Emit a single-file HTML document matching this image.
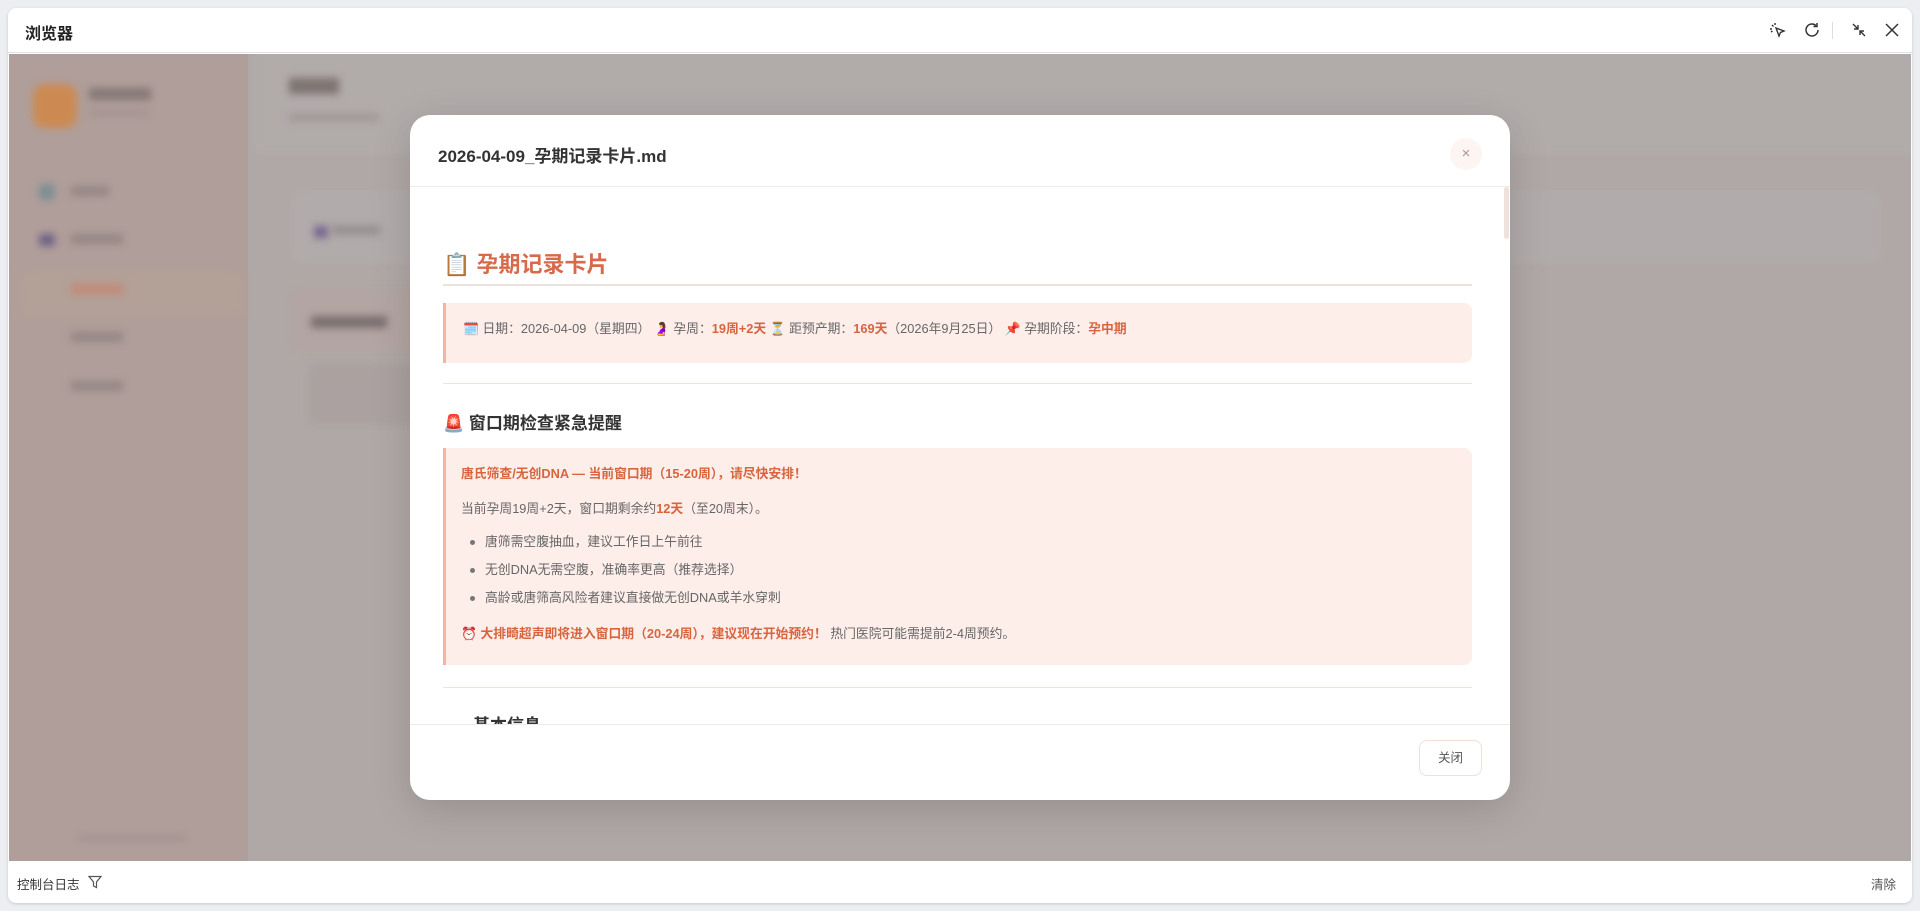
<!DOCTYPE html>
<html><head><meta charset="utf-8"><style>
*{box-sizing:border-box;margin:0;padding:0}
body{width:1920px;height:911px;background:#eceef2;font-family:"Liberation Sans","Noto Sans CJK SC",sans-serif;position:relative;overflow:hidden}
.win{position:absolute;left:8px;top:8px;width:1904px;height:895px;background:#fff;border-radius:8px;box-shadow:0 1px 3px rgba(0,0,0,.15);overflow:hidden}
.tb{position:absolute;left:0;top:0;width:100%;height:45px;border-bottom:1px solid #e2e2e6}
.tb .t{position:absolute;left:17px;top:12px;font-size:16px;font-weight:bold;color:#222}
.stage{position:absolute;left:1px;top:46px;width:1902px;height:807px;background:#b0a8a6;overflow:hidden}
.side{position:absolute;left:0;top:0;width:239px;height:100%;background:#b09e9a}
.blur{filter:blur(4px)}
.bot{position:absolute;left:0;top:853px;width:100%;height:42px}
.modal{position:absolute;left:410px;top:115px;width:1100px;height:685px;background:#fff;border-radius:20px;overflow:hidden;box-shadow:0 10px 40px rgba(0,0,0,.15)}
.mh{height:72px;border-bottom:1px solid #f0ebe9;position:relative}
.mh .t{position:absolute;left:28px;top:27px;font-size:17px;font-weight:bold;color:#333}
.xc{position:absolute;left:1040px;top:23px;width:32px;height:32px;border-radius:50%;background:#fdf5f1;color:#b09591;text-align:center;line-height:31px;font-size:15px}
.body{position:absolute;left:0;top:72px;width:1100px;height:537px;overflow:hidden}
.sb{position:absolute;left:1094px;top:0;width:5px;height:52px;background:#efe2dd;border-radius:3px}
.c{position:absolute;left:33px;width:1029px}
.h1{font-size:22px;font-weight:bold;color:#d86a4c}
.hr{height:1px;background:#f0e3dc}
.box{background:#fdeeea;border-left:3px solid #f4b3a3;border-radius:0 8px 8px 0}
.tx{font-size:12.8px;color:#666;white-space:nowrap}
.r{color:#d8643f;font-weight:bold}
.h2{font-size:17px;font-weight:bold;color:#333}
.ft{position:absolute;left:0;top:609px;width:1100px;height:76px;border-top:1px solid #f0ebe9}
.btn{position:absolute;left:1009px;top:15px;width:63px;height:36px;border:1px solid #f0e0d8;border-radius:8px;font-size:12.5px;color:#555;text-align:center;line-height:34px}
li{list-style:none;position:relative;padding-left:24px}
li:before{content:"";position:absolute;left:9px;top:12px;width:5px;height:5px;border-radius:50%;background:#777}
</style></head><body>
<div class="win">
<div class="tb"><div class="t">浏览器</div>
<svg style="position:absolute;left:1760px;top:13px" width="20" height="20" viewBox="0 0 20 20" fill="none" stroke="#333" stroke-width="1.4"><path d="M8 7l8 3-3.5 1.5L11 15z"/><path d="M4 4l1.5 1.5M2 8h2M7 2v2M3 11l1.5-1"/></svg>
<svg style="position:absolute;left:1795px;top:13px" width="18" height="18" viewBox="0 0 18 18" fill="none" stroke="#333" stroke-width="1.5"><path d="M15 9a6 6 0 1 1-2-4.5"/><path d="M14 2v3.5h-3.5"/></svg>
<div style="position:absolute;left:1824px;top:14px;width:1px;height:17px;background:#ddd"></div>
<svg style="position:absolute;left:1843px;top:14px" width="16" height="16" viewBox="0 0 16 16" fill="none" stroke="#333" stroke-width="1.4"><path d="M2 2l5 5M7 3v4H3M14 14l-5-5M9 13V9h4"/></svg>
<svg style="position:absolute;left:1876px;top:14px" width="16" height="16" viewBox="0 0 16 16" fill="none" stroke="#333" stroke-width="1.5"><path d="M2 2l12 12M14 2L2 14"/></svg>
</div>
<div class="stage">
<div class="side">
<div class="blur" style="position:absolute;left:24px;top:30px;width:44px;height:44px;border-radius:12px;background:#cc8a52"></div>
<div class="blur" style="position:absolute;left:80px;top:34px;width:62px;height:12px;background:#857876"></div>
<div class="blur" style="position:absolute;left:80px;top:56px;width:60px;height:6px;background:#a29491"></div>
<div class="blur" style="position:absolute;left:30px;top:130px;width:16px;height:16px;background:#7d8e96;border-radius:4px"></div>
<div class="blur" style="position:absolute;left:62px;top:132px;width:38px;height:10px;background:#958785"></div>
<div class="blur" style="position:absolute;left:30px;top:180px;width:16px;height:12px;background:#6e5f86;border-radius:3px"></div>
<div class="blur" style="position:absolute;left:62px;top:180px;width:52px;height:10px;background:#958785"></div>
<div class="blur" style="position:absolute;left:10px;top:218px;width:226px;height:44px;background:#b3a097;border-radius:8px"></div>
<div class="blur" style="position:absolute;left:62px;top:230px;width:52px;height:10px;background:#c28a78"></div>
<div class="blur" style="position:absolute;left:62px;top:278px;width:52px;height:10px;background:#958785"></div>
<div class="blur" style="position:absolute;left:62px;top:327px;width:52px;height:10px;background:#958785"></div>
<div class="blur" style="position:absolute;left:68px;top:781px;width:110px;height:6px;background:#a29491"></div>
</div>
<div class="blur" style="position:absolute;left:244px;top:-10px;width:1663px;height:110px;background:#b1abaa"></div>
<div class="blur" style="position:absolute;left:280px;top:24px;width:50px;height:16px;background:#7e7371"></div>
<div class="blur" style="position:absolute;left:280px;top:60px;width:90px;height:7px;background:#a09694"></div>
<div class="blur" style="position:absolute;left:282px;top:137px;width:1590px;height:72px;background:#b1abab;border-radius:10px"></div>
<div class="blur" style="position:absolute;left:305px;top:172px;width:14px;height:12px;background:#75668e"></div>
<div class="blur" style="position:absolute;left:323px;top:172px;width:48px;height:8px;background:#938b8b"></div>
<div class="blur" style="position:absolute;left:282px;top:236px;width:200px;height:60px;background:#b3a5a2;border-radius:10px"></div>
<div class="blur" style="position:absolute;left:302px;top:262px;width:76px;height:12px;background:#7a6e6e"></div>
<div class="blur" style="position:absolute;left:300px;top:310px;width:110px;height:60px;background:#aaa1a0"></div>
</div>
<div class="bot">
<div style="position:absolute;left:9px;top:13px;font-size:12.5px;color:#333">控制台日志</div>
<svg style="position:absolute;left:80px;top:14px" width="14" height="14" viewBox="0 0 14 14" fill="none" stroke="#555" stroke-width="1.2"><path d="M1 1.5h12L8.5 7v5.5l-3-1.5V7z"/></svg>
<div style="position:absolute;right:16px;top:13px;font-size:12.5px;color:#555">清除</div>
</div>
</div>
<div class="modal">
<div class="mh"><div class="t">2026-04-09_孕期记录卡片.md</div><div class="xc">×</div></div>
<div class="body">
<div class="sb"></div>
<div class="c" style="top:60px"><div class="h1">📋 孕期记录卡片</div></div>
<div class="c" style="top:97px;height:2px;background:#ebe2dd"></div>
<div class="c box" style="top:116px;height:60px"><div class="tx" style="position:absolute;left:17px;top:15px">🗓️ 日期：2026-04-09（星期四） 🤰 孕周：<span class="r">19周+2天</span> ⏳ 距预产期：<span class="r">169天</span>（2026年9月25日） 📌 孕期阶段：<span class="r">孕中期</span></div></div>
<div class="c hr" style="top:196px"></div>
<div class="c" style="top:222px"><div class="h2">🚨 窗口期检查紧急提醒</div></div>
<div class="c box" style="top:261px;height:217px">
<div class="tx r" style="position:absolute;left:15px;top:15px">唐氏筛查/无创DNA — 当前窗口期（15-20周），请尽快安排！</div>
<div class="tx" style="position:absolute;left:15px;top:50px">当前孕周19周+2天，窗口期剩余约<span class="r">12天</span>（至20周末）。</div>
<ul class="tx" style="position:absolute;left:15px;top:80px;line-height:28px">
<li>唐筛需空腹抽血，建议工作日上午前往</li>
<li>无创DNA无需空腹，准确率更高（推荐选择）</li>
<li>高龄或唐筛高风险者建议直接做无创DNA或羊水穿刺</li></ul>
<div class="tx" style="position:absolute;left:15px;top:175px">⏰ <span class="r">大排畸超声即将进入窗口期（20-24周），建议现在开始预约！</span> 热门医院可能需提前2-4周预约。</div>
</div>
<div class="c hr" style="top:500px"></div>
<div class="c" style="top:524px"><div class="h2"><span style="display:inline-block;width:16px;height:2px;background:#333;vertical-align:middle;margin-right:14px"></span>基本信息</div></div>
</div>
<div class="ft"><div class="btn">关闭</div></div>
</div>
</body></html>
